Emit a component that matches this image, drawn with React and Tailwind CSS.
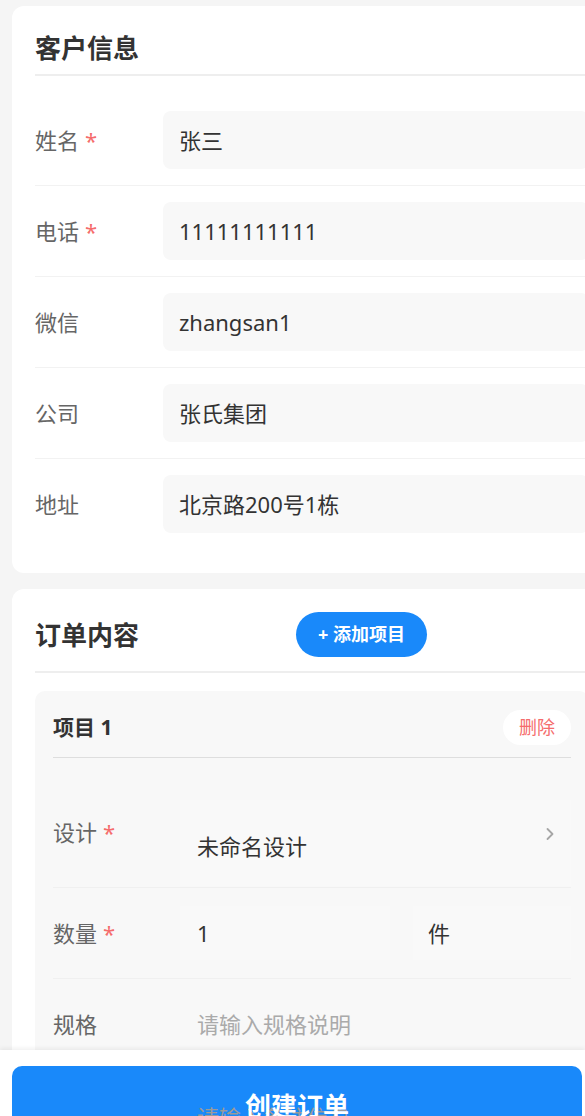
import React from 'react';
import { ChevronRight } from 'lucide-react';

const customer = [
  { label: '姓名', value: '张三', required: true },
  { label: '电话', value: '11111111111', required: true },
  { label: '微信', value: 'zhangsan1' },
  { label: '公司', value: '张氏集团' },
  { label: '地址', value: '北京路200号1栋' },
];

const Label = ({ text, required }) => (
  <span className="text-[22px] leading-[30px] text-[#666]">
    {text}
    {required && <span className="ml-[6px] text-[#f56c6c]">*</span>}
  </span>
);

const CustomerRow = ({ field }) => (
  <div className="flex items-center py-[16px] border-b border-[#f2f2f2] last:border-b-0">
    <div className="w-[128px] shrink-0">
      <Label text={field.label} required={field.required} />
    </div>
    <div className="flex-1 h-[58px] rounded-[8px] bg-[#f8f8f8] px-[16px] flex items-center text-[22px] text-[#333]">
      {field.value}
    </div>
  </div>
);

const OrderItem = () => (
  <div className="bg-[#f8f8f8] rounded-[10px] px-[18px] pt-[19px]">
    <div className="flex items-center justify-between h-[35px]">
      <span className="text-[21px] font-bold text-[#333]">项目 1</span>
      <button className="h-[35px] px-[16px] rounded-full bg-white text-[18px] text-[#f56c6c]">删除</button>
    </div>
    <div className="mt-[12px] border-b border-[#dedede]" />

    <div className="flex h-[130px] border-b border-[#f0f0f0]">
      <div className="w-[127px] shrink-0 pt-[59px]">
        <Label text="设计" required />
      </div>
      <div className="relative flex-1 mt-[42px] mb-[1px] bg-[#f9f9f9] pl-[17px] pt-[31px] text-[22px] leading-[30px] text-[#333]">
        未命名设计
        <ChevronRight size={20} strokeWidth={2.2} className="absolute right-[11px] top-[24px] text-[#a6a6a6]" />
      </div>
    </div>

    <div className="flex items-center h-[91px] border-b border-[#f0f0f0]">
      <div className="w-[127px] shrink-0">
        <Label text="数量" required />
      </div>
      <div className="w-[210px] h-[54px] bg-[#f9f9f9] pl-[17px] flex items-center text-[22px] text-[#333]">1</div>
      <div className="flex-1 ml-[23px] h-[54px] bg-[#f9f9f9] pl-[15px] flex items-center text-[22px] text-[#333]">件</div>
    </div>

    <div className="flex items-center h-[91px] border-b border-[#f0f0f0]">
      <div className="w-[127px] shrink-0">
        <Label text="规格" />
      </div>
      <div className="flex-1 pl-[17px] text-[22px] text-[#aaa]">请输入规格说明</div>
    </div>

    <div className="flex items-center h-[91px]">
      <div className="w-[127px] shrink-0">
        <Label text="备注" />
      </div>
      <div className="flex-1 pl-[17px] text-[22px] text-[#aaa]">请输入备注信息</div>
    </div>
  </div>
);

export default function App() {
  return (
    <div className="w-[585px] min-h-screen overflow-hidden bg-[#f5f5f5] font-['Noto_Sans','Noto_Sans_CJK_SC',sans-serif]">
      <div className="w-[624px] px-[12px] pt-[6px] pb-[140px] flex flex-col gap-[16px]">
        <section className="bg-white rounded-[12px] px-[23px] pt-[22px] pb-[24px]">
          <h2 className="text-[26px] font-bold leading-[40px] text-[#333] pb-[6px] mb-[19px] border-b-2 border-[#eeeeee]">
            客户信息
          </h2>
          {customer.map((f) => (
            <CustomerRow key={f.label} field={f} />
          ))}
        </section>

        <section className="bg-white rounded-[12px] px-[23px] pt-[23px] pb-[24px]">
          <div className="flex items-center h-[45px] mb-[14px]">
            <h2 className="w-[261px] text-[26px] font-bold text-[#333] pt-[2px]">订单内容</h2>
            <button className="h-[45px] px-[22px] rounded-full bg-[#1989fa] text-white text-[18px] font-bold">
              + 添加项目
            </button>
          </div>
          <div className="border-b-2 border-[#eeeeee] mb-[18px]" />
          <OrderItem />
        </section>
      </div>

      <div className="fixed left-0 top-[1050px] w-[585px] h-[66px] bg-white shadow-[0_-2px_4px_rgba(0,0,0,0.06)] pt-[16px] px-[12px]">
        <button className="relative w-[570px] h-[80px] rounded-[10px] bg-[#1989fa] flex items-center justify-center">
          <span className="absolute left-[185px] top-[36px] text-[22px] leading-[30px] text-[#9a9a9a]">请输入备注信息</span>
          <span className="relative text-[26px] font-bold text-white">创建订单</span>
        </button>
      </div>
    </div>
  );
}
